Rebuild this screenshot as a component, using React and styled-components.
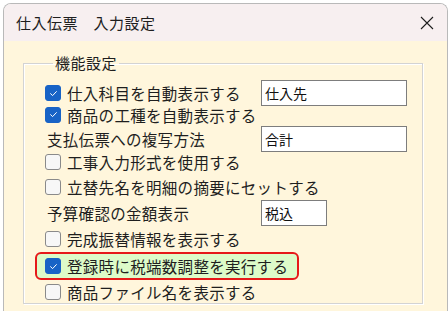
import React from 'react'
import styled, { createGlobalStyle } from 'styled-components'

const GlobalStyle = createGlobalStyle`
    html, body {
        margin: 0;
        padding: 0;
        background: #ffffff;
        overflow: hidden;
    }
    body {
        font-family: "Noto Sans CJK JP", "Noto Sans", sans-serif;
        color: #1e1e1e;
    }
`

const rows = [
    { h: 23, check: true, label: '仕入科目を自動表示する', input: '仕入先', w: 146 },
    { h: 23, check: true, label: '商品の工種を自動表示する' },
    { h: 23, label: '支払伝票への複写方法', input: '合計', w: 146 },
    { h: 25, check: false, label: '工事入力形式を使用する' },
    { h: 26, check: false, label: '立替先名を明細の摘要にセットする' },
    { h: 26, label: '予算確認の金額表示', input: '税込', w: 66 },
    { h: 26, check: false, label: '完成振替情報を表示する' },
    { h: 28, check: true, label: '登録時に税端数調整を実行する', highlight: true },
    { h: 24, check: false, label: '商品ファイル名を表示する' },
]

function CheckBox({ checked }) {
    return (
        <Box $checked={checked}>
            {checked && (
                <svg width="11" height="11" viewBox="0 0 11 11">
                    <path d="M2.6 5.7 L4.6 7.6 L8.4 3.6" fill="none" stroke="#fff" strokeWidth="1" strokeLinecap="round" strokeLinejoin="round" />
                </svg>
            )}
        </Box>
    )
}

function App() {
    return (
        <>
            <GlobalStyle />
            <Window>
                <TitleBar>
                    <Title>仕入伝票　入力設定</Title>
                    <CloseButton>
                        <svg width="14" height="14" viewBox="0 0 14 14">
                            <path d="M1 1 L13 13 M13 1 L1 13" stroke="#1e1e1e" strokeWidth="1.1" />
                        </svg>
                    </CloseButton>
                </TitleBar>
                <Content>
                    <Group>
                        <Legend>機能設定</Legend>
                        {rows.map((r, i) => (
                            <Row key={i} $h={r.h}>
                                <Option $highlight={r.highlight}>
                                    {r.check !== undefined && <CheckBox checked={r.check} />}
                                    <Label $plain={r.check === undefined}>{r.label}</Label>
                                </Option>
                                {r.input && <Field $w={r.w}>{r.input}</Field>}
                            </Row>
                        ))}
                    </Group>
                </Content>
            </Window>
        </>
    )
}

export default App

const Window = styled.div`
    margin: 3px 0 0 3px;
    width: 445px;
    height: 308px;
    box-sizing: border-box;
    border: 1px solid #b9b9b9;
    border-bottom: none;
    border-radius: 8px 8px 0 0;
    overflow: hidden;
    display: flex;
    flex-direction: column;
`

const TitleBar = styled.div`
    height: 37px;
    flex: none;
    display: flex;
    align-items: center;
    justify-content: space-between;
    padding: 0 13px 0 12px;
    background: #f7eff0;
`

const Title = styled.div`
    font-size: 15px;
    letter-spacing: 0.5px;
    color: #1e1e1e;
`

const CloseButton = styled.div`
    width: 14px;
    height: 14px;
    display: flex;
`

const Content = styled.div`
    flex: 1;
    background: #fff6dc;
    padding: 12px 22px 0 19px;
`

const Group = styled.fieldset`
    margin: 0;
    padding: 7px 0 0 21px;
    width: 400px;
    height: 251px;
    box-sizing: border-box;
    border: 1px solid #d3d3d3;
    box-shadow: inset 1px 1px 0 #ffffff, 1px 1px 0 #ffffff;
`

const Legend = styled.legend`
    margin-left: 8px;
    padding: 0 2px;
    font-size: 15px;
    line-height: 20px;
    letter-spacing: 0.5px;
`

const Row = styled.div`
    height: ${p => p.$h}px;
    display: grid;
    grid-template-columns: 216px auto;
    align-items: center;
`

const Option = styled.div`
    display: flex;
    align-items: center;
    gap: 6px;
    ${p => p.$highlight && `
        justify-self: start;
        height: 28px;
        box-sizing: border-box;
        margin-left: -10px;
        padding: 0 9px 0 8px;
        border: 2px solid #e61919;
        border-radius: 6px;
        background: #ddfbc9;
        grid-column: 1 / span 2;
    `}
`

const Box = styled.div`
    width: 16px;
    height: 16px;
    box-sizing: border-box;
    border-radius: 3px;
    flex: none;
    display: flex;
    align-items: center;
    justify-content: center;
    background: ${p => (p.$checked ? '#1863c6' : '#f7f7f7')};
    border: 1px solid ${p => (p.$checked ? '#1863c6' : '#8a8a8a')};
`

const Label = styled.span`
    font-size: 15.5px;
    line-height: 20px;
    letter-spacing: 0.3px;
    white-space: nowrap;
    margin-left: ${p => (p.$plain ? '2px' : '0')};
`

const Field = styled.div`
    width: ${p => p.$w}px;
    height: 26px;
    box-sizing: border-box;
    border: 1px solid #7d7d7d;
    background: #ffffff;
    font-size: 14px;
    line-height: 24px;
    padding-left: 3px;
    color: #111;
`
